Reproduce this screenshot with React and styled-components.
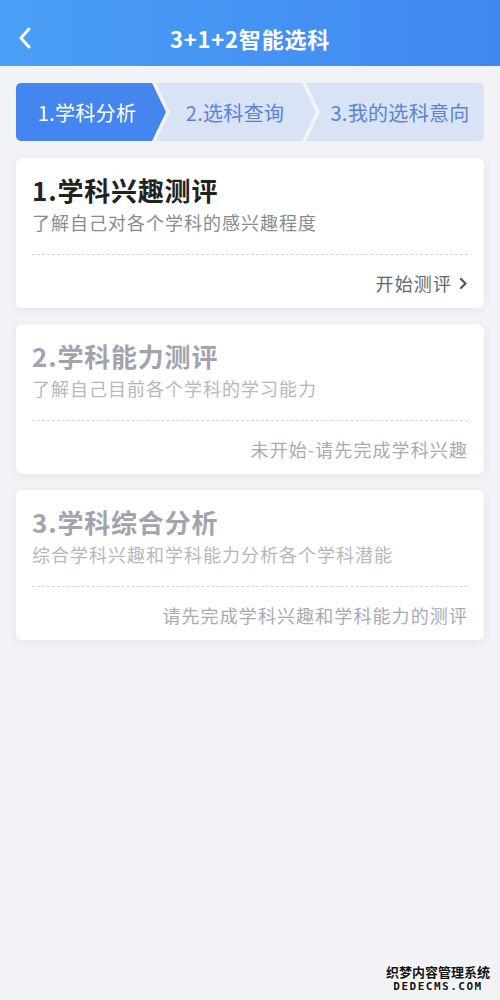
import styled, { createGlobalStyle } from "styled-components";

const GlobalStyle = createGlobalStyle`
  * { box-sizing: border-box; }
  html, body { margin: 0; padding: 0; background: #f2f3f7; }
  body { font-family: "Noto Sans CJK SC", "Noto Sans", sans-serif; }
`

const steps = ["1.学科分析", "2.选科查询", "3.我的选科意向"]

const cards = [
  { title: "1.学科兴趣测评", desc: "了解自己对各个学科的感兴趣程度", action: "开始测评", active: true },
  { title: "2.学科能力测评", desc: "了解自己目前各个学科的学习能力", action: "未开始-请先完成学科兴趣" },
  { title: "3.学科综合分析", desc: "综合学科兴趣和学科能力分析各个学科潜能", action: "请先完成学科兴趣和学科能力的测评" },
]

function App() {
  return (
    <Page>
      <GlobalStyle />
      <Header>
        <BackBtn>
          <svg width="14" height="22" viewBox="0 0 14 22">
            <path d="M11 2 L3 11 L11 20" fill="none" stroke="#fff" strokeWidth="3" strokeLinecap="round" strokeLinejoin="round" />
          </svg>
        </BackBtn>
        <Title>3+1+2智能选科</Title>
      </Header>

      <Content>
        <Steps>
          {steps.map((s, i) => (
            <Step key={s} $index={i} $active={i === 0}>{s}</Step>
          ))}
        </Steps>

        {cards.map((c) => (
          <Card key={c.title}>
            <CardTitle $active={c.active}>{c.title}</CardTitle>
            <CardDesc $active={c.active}>{c.desc}</CardDesc>
            <Divider />
            <CardAction $active={c.active}>
              {c.action}
              {c.active && (
                <svg width="9" height="13" viewBox="0 0 9 13">
                  <path d="M2 2 L6.5 6.5 L2 11" fill="none" stroke="#555" strokeWidth="2.2" strokeLinecap="round" strokeLinejoin="round" />
                </svg>
              )}
            </CardAction>
          </Card>
        ))}
      </Content>

      <Watermark>
        <span>织梦内容管理系统</span>
        <span className="en">DEDECMS.COM</span>
      </Watermark>
    </Page>
  )
}

const Page = styled.div`
  position: relative;
  min-height: 100vh;
  background: #f2f3f7;
`
const Header = styled.header`
  height: 66px;
  display: flex;
  align-items: center;
  justify-content: center;
  position: relative;
  background: linear-gradient(90deg, #4a9ff6 0%, #3f88f1 100%);
`
const BackBtn = styled.div`
  position: absolute;
  left: 18px;
  top: 27px;
  display: flex;
`
const Title = styled.h1`
  margin: 0;
  color: #fff;
  font-size: 22px;
  font-weight: 700;
  letter-spacing: 0.8px;
  padding-top: 10px;
`
const Content = styled.div`
  padding: 17px 16px;
  display: flex;
  flex-direction: column;
  gap: 16px;
`
const Steps = styled.div`
  display: flex;
  height: 58px;
  margin-bottom: 1px;
`
const Step = styled.div`
  display: flex;
  align-items: center;
  justify-content: center;
  font-size: 20px;
  letter-spacing: 0.3px;
  background: ${(p) => (p.$active ? "#4585ef" : "#d9e3f6")};
  color: ${(p) => (p.$active ? "#fff" : "#5b82d8")};
  width: ${(p) => ["150px", "160px", "178px"][p.$index]};
  margin-left: ${(p) => (p.$index === 0 ? "0" : "-10px")};
  padding-left: ${(p) => (p.$index === 0 ? "0" : p.$index === 1 ? "6px" : "10px")};
  padding-right: ${(p) => (p.$index === 2 ? "0" : "8px")};
  border-radius: ${(p) => (p.$index === 0 ? "5px 0 0 5px" : p.$index === 2 ? "0 5px 5px 0" : "0")};
  clip-path: ${(p) =>
    p.$index === 0
      ? "polygon(0 0, calc(100% - 14px) 0, 100% 50%, calc(100% - 14px) 100%, 0 100%)"
      : p.$index === 1
      ? "polygon(0 0, calc(100% - 14px) 0, 100% 50%, calc(100% - 14px) 100%, 0 100%, 14px 50%)"
      : "polygon(0 0, 100% 0, 100% 100%, 0 100%, 14px 50%)"};
`
const Card = styled.div`
  background: #fff;
  border-radius: 6px;
  box-shadow: 0 2px 8px rgba(40, 50, 80, 0.07);
  padding: 14px 16px 11px;
`
const CardTitle = styled.div`
  font-size: 26px;
  font-weight: 700;
  line-height: 36px;
  letter-spacing: 0.8px;
  color: ${(p) => (p.$active ? "#222" : "#a2a4ad")};
`
const CardDesc = styled.div`
  font-size: 18px;
  line-height: 28px;
  letter-spacing: 1px;
  color: ${(p) => (p.$active ? "#8a8a8e" : "#b6b7be")};
`
const Divider = styled.div`
  margin-top: 18px;
  border-top: 1px dashed #d4d5da;
`
const CardAction = styled.div`
  margin-top: 14px;
  display: flex;
  align-items: center;
  justify-content: flex-end;
  gap: 7px;
  font-size: 18px;
  line-height: 28px;
  letter-spacing: 1.1px;
  color: ${(p) => (p.$active ? "#666" : "#a9aab1")};
`
const Watermark = styled.div`
  position: absolute;
  right: 10px;
  bottom: 6px;
  display: flex;
  flex-direction: column;
  align-items: center;
  font-size: 13px;
  font-weight: 700;
  line-height: 15px;
  color: #111;
  text-shadow: 1px 0 0 #fff, -1px 0 0 #fff, 0 1px 0 #fff, 0 -1px 0 #fff;
  .en {
    font-family: "DejaVu Sans Mono", monospace;
    font-size: 11px;
    letter-spacing: 1.5px;
  }
`

export default App
